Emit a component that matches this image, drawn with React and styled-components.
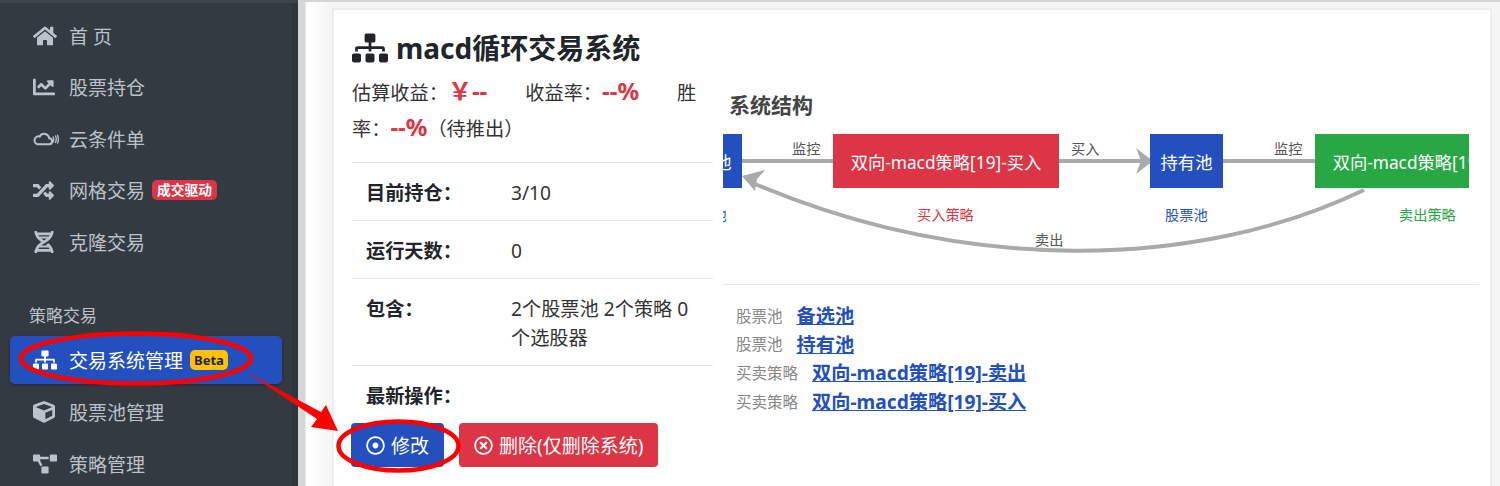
import React from 'react'
import styled, { createGlobalStyle } from 'styled-components'
import { FaHome, FaChartLine, FaRandom, FaDna, FaSitemap, FaCube, FaProjectDiagram, FaRegDotCircle, FaRegTimesCircle } from 'react-icons/fa'

const Global = createGlobalStyle`
    html, body { margin: 0; padding: 0; background: #fff; overflow: hidden; }
    * { box-sizing: border-box; }
    body { font-family: "Noto Sans", "Noto Sans CJK SC", sans-serif; color: #212529; }
`

const CloudIcon = () => (
    <svg width="27" height="15" viewBox="0 0 40 22" fill="none" stroke="currentColor" strokeWidth="3">
        <path d="M8 19.5h17a4.5 4.5 0 0 0 .5-9 7.5 7.5 0 0 0-14-2.5A5.8 5.8 0 0 0 8 19.5z" />
        <path d="M31 8c1.500 3 1.500 6 0 9M34.500 6.500c2 3.500 2 7 0 11M37.500 5.500c2 4 2 9 0 13" strokeWidth="2" />
    </svg>
)

const Page = styled.div`
    position: relative;
    display: flex;
    width: 1500px;
    height: 486px;
    overflow: hidden;
`

const Sidebar = styled.aside`
    flex: 0 0 298px;
    background: linear-gradient(to right, #343a42 292px, #30353a 292px);
    border-top: 3px solid #3d434b;
    padding: 7px 16px 0 10px;
`

const NavItem = styled.div`
    display: flex;
    align-items: center;
    height: ${p => (p.$active ? '48px' : '51.5px')};
    margin: ${p => (p.$active ? '0 0 3px' : '0')};
    padding-left: 20px;
    border-radius: 5px;
    font-size: 19px;
    color: ${p => (p.$active ? '#fff' : '#bcc2c9')};
    background: ${p => (p.$active ? '#2450bf' : 'transparent')};
    box-shadow: ${p => (p.$active ? '0 1px 3px rgba(0,0,0,.3)' : 'none')};
`

const NavIcon = styled.span`
    flex: 0 0 36px;
    display: flex;
    align-items: center;
    margin-left: ${p => (p.$wide ? '2px' : '3px')};
    margin-right: ${p => (p.$wide ? '1px' : '0')};
    color: ${p => (p.$active ? '#fff' : '#bcc2cc')};
`

const NavBadge = styled.span`
    margin-left: 7px;
    padding: 2px ${p => (p.$warn ? '4px' : '5px')};
    border-radius: 5px;
    font-size: ${p => (p.$warn ? '13px' : '13.75px')};
    line-height: 16px;
    font-weight: 700;
    color: ${p => (p.$warn ? '#212529' : '#fff')};
    background: ${p => (p.$warn ? '#ffc107' : '#dc3545')};
`

const NavSection = styled.div`
    margin: 36px 0 8px 19px;
    font-size: 17px;
    line-height: 24px;
    color: #bcc2c9;
`

const Main = styled.main`
    flex: 1;
    display: flex;
    background: linear-gradient(to right, #d4d6d9 7px, #e6e7e9 7px, #fff 9px, #f5f5f5 34px);
    border-top: 2px solid #d4d5d7;
    padding: 6px 8px 0 34px;
`

const Card = styled.section`
    flex: 1;
    display: flex;
    align-items: flex-start;
    height: 600px;
    background: #fff;
    border: 2px solid #ededed;
    padding: 0 11px 0 18px;
`

const Summary = styled.div`
    flex: 0 0 361px;
`

const Title = styled.h1`
    display: flex;
    align-items: center;
    gap: 8px;
    margin: 17px 0 0;
    font-size: 28px;
    line-height: 42px;
    font-weight: 700;
    svg { font-size: 36px; }
`

const Stats = styled.p`
    margin: 6px 0 15px;
    width: 346px;
    font-size: 19.200px;
    line-height: 36px;
    color: #333;
`

const StatValue = styled.strong`
    font-size: 24px;
    line-height: 1;
    color: #dc3545;
    margin-right: ${p => (p.$last ? '0' : '38px')};
`

const Row = styled.div`
    display: flex;
    padding: 15px 14px 13px;
    border-top: 1px solid #e6e8ea;
    font-size: 19.200px;
    line-height: 29px;
    min-height: 58px;
`

const RowLabel = styled.div`
    flex: 0 0 145px;
    font-weight: 700;
`

const RowValue = styled.div`
    flex: 1;
    color: #333;
`

const Actions = styled.div`
    display: flex;
    gap: 15px;
    margin-left: -1px;
`

const Button = styled.button`
    display: flex;
    align-items: center;
    gap: 6px;
    height: 44px;
    padding: 0 15px;
    border: 0;
    border-radius: 4px;
    font: inherit;
    font-size: 19px;
    color: #fff;
    background: ${p => p.$color};
    svg { font-size: 19px; }
`

const Structure = styled.div`
    flex: 1;
    margin-left: 10px;
    padding-top: 80px;
`

const StructureTitle = styled.h2`
    margin: 0 0 14px 6px;
    font-size: 21px;
    line-height: 30px;
    font-weight: 700;
    color: #444;
`

const Diagram = styled.div`
    position: relative;
    width: 746px;
    height: 150px;
    overflow: hidden;
`

const Node = styled.div`
    position: absolute;
    top: 0;
    height: 54px;
    display: flex;
    align-items: center;
    justify-content: center;
    white-space: nowrap;
    font-size: 17.300px;
    color: #fff;
    background: ${p => p.$color};
`

const EdgeLabel = styled.span`
    position: absolute;
    font-size: 14.200px;
    line-height: 20px;
    white-space: nowrap;
    color: ${p => p.$color || '#555'};
`

const Links = styled.div`
    border-top: 1px solid #e8e9ea;
    padding: 16px 13px;
`

const LinkRow = styled.div`
    display: flex;
    align-items: center;
    gap: 14px;
    height: 28.600px;
`

const LinkKind = styled.span`
    font-size: 15.500px;
    color: #888;
`

const LinkName = styled.a`
    font-size: 19.200px;
    font-weight: 700;
    color: #2450bf;
    text-decoration: underline;
`

const Overlay = styled.svg`
    position: absolute;
    inset: 0;
    pointer-events: none;
`

const App = () => (
    <Page>
        <Global />
        <Sidebar>
            <NavItem><NavIcon><FaHome size={24} /></NavIcon>首 页</NavItem>
            <NavItem><NavIcon><FaChartLine size={22} /></NavIcon>股票持仓</NavItem>
            <NavItem><NavIcon $wide><CloudIcon /></NavIcon>云条件单</NavItem>
            <NavItem><NavIcon><FaRandom size={21} /></NavIcon>网格交易<NavBadge>成交驱动</NavBadge></NavItem>
            <NavItem><NavIcon><FaDna size={22} /></NavIcon>克隆交易</NavItem>
            <NavSection>策略交易</NavSection>
            <NavItem $active><NavIcon $active><FaSitemap size={24} /></NavIcon>交易系统管理<NavBadge $warn>Beta</NavBadge></NavItem>
            <NavItem><NavIcon><FaCube size={22} /></NavIcon>股票池管理</NavItem>
            <NavItem><NavIcon><FaProjectDiagram size={24} /></NavIcon>策略管理</NavItem>
        </Sidebar>
        <Main>
            <Card>
                <Summary>
                    <Title><FaSitemap />macd循环交易系统</Title>
                    <Stats>
                        估算收益：<StatValue>￥--</StatValue>收益率：<StatValue>--%</StatValue>胜率：<StatValue $last>--%</StatValue>（待推出）
                    </Stats>
                    <Row><RowLabel>目前持仓：</RowLabel><RowValue>3/10</RowValue></Row>
                    <Row><RowLabel>运行天数：</RowLabel><RowValue>0</RowValue></Row>
                    <Row><RowLabel>包含：</RowLabel><RowValue>2个股票池 2个策略 0个选股器</RowValue></Row>
                    <Row><RowLabel>最新操作：</RowLabel></Row>
                    <Actions>
                        <Button $color="#2450bf"><FaRegDotCircle />修改</Button>
                        <Button $color="#dc3545"><FaRegTimesCircle />删除(仅删除系统)</Button>
                    </Actions>
                </Summary>
                <Structure>
                    <StructureTitle>系统结构</StructureTitle>
                    <Diagram>
                        <svg width="746" height="150" fill="none">
                            <path d="M19 27H110M336 27H420M500 27H592" stroke="#aaa" strokeWidth="4" />
                            <path d="M641 56C470 138 240 138 32 50" stroke="#aaa" strokeWidth="4" />
                            <path d="M430 27L413 14L418 27L413 40Z" fill="#aaa" />
                            <path d="M19 42L42 36L34 45L32 57Z" fill="#aaa" />
                        </svg>
                        <Node $color="#2450bf" style={{ left: -54, width: 73 }}>持有池</Node>
                        <Node $color="#dc3545" style={{ left: 110, width: 226 }}>双向-macd策略[19]-买入</Node>
                        <Node $color="#2450bf" style={{ left: 427, width: 73 }}>持有池</Node>
                        <Node $color="#28a745" style={{ left: 592, width: 226 }}>双向-macd策略[19]-卖出</Node>
                        <EdgeLabel style={{ left: 69, top: 5 }}>监控</EdgeLabel>
                        <EdgeLabel style={{ left: 348, top: 5 }}>买入</EdgeLabel>
                        <EdgeLabel style={{ left: 551, top: 5 }}>监控</EdgeLabel>
                        <EdgeLabel style={{ left: 312, top: 96 }}>卖出</EdgeLabel>
                        <EdgeLabel $color="#2450bf" style={{ left: -39, top: 71 }}>股票池</EdgeLabel>
                        <EdgeLabel $color="#dc3545" style={{ left: 194, top: 71 }}>买入策略</EdgeLabel>
                        <EdgeLabel $color="#2450bf" style={{ left: 442, top: 71 }}>股票池</EdgeLabel>
                        <EdgeLabel $color="#28a745" style={{ left: 676, top: 71 }}>卖出策略</EdgeLabel>
                    </Diagram>
                    <Links>
                        <LinkRow><LinkKind>股票池</LinkKind><LinkName>备选池</LinkName></LinkRow>
                        <LinkRow><LinkKind>股票池</LinkKind><LinkName>持有池</LinkName></LinkRow>
                        <LinkRow><LinkKind>买卖策略</LinkKind><LinkName>双向-macd策略[19]-卖出</LinkName></LinkRow>
                        <LinkRow><LinkKind>买卖策略</LinkKind><LinkName>双向-macd策略[19]-买入</LinkName></LinkRow>
                    </Links>
                </Structure>
            </Card>
        </Main>
        <Overlay width="1500" height="486" fill="none">
            <ellipse cx="136" cy="358.500" rx="115" ry="25" stroke="#f00" strokeWidth="4.500" />
            <ellipse cx="398.500" cy="446" rx="60" ry="24.500" stroke="#f00" strokeWidth="4.500" />
            <path d="M246 372L321 412L326 405L338 431L311 427L317 419Z" fill="#f00" />
        </Overlay>
    </Page>
)

export default App
